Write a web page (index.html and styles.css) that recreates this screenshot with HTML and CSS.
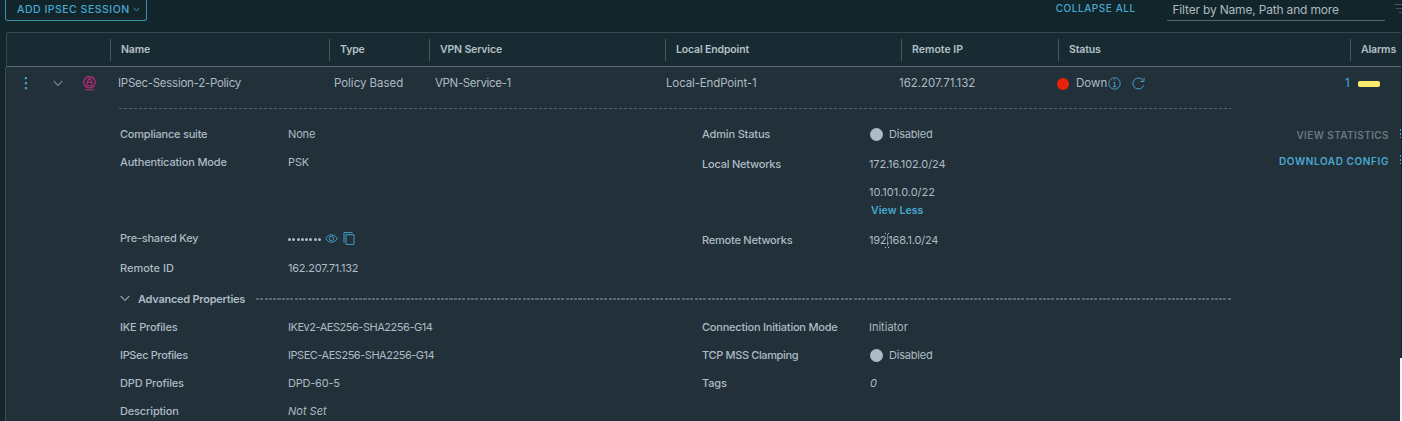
FILE: index.html
```html
<!DOCTYPE html>
<html lang="en">
<head>
<meta charset="utf-8">
<title>IPSec Sessions</title>
<link rel="stylesheet" href="styles.css">
</head>
<body>
<div class="toolbar">
  <button class="add-btn"><span class="add-text">ADD IPSEC SESSION</span>
    <svg width="7" height="5" viewBox="0 0 7 5"><path d="M.7 1 3.500 3.700 6.300 1"/></svg></button>
  <a class="collapse">COLLAPSE ALL</a>
  <div class="filter">Filter by Name, Path and more</div>
  <svg class="filter-icon" width="8" height="12" viewBox="0 0 8 12"><path d="M0 1.500h8M2 5.500h6M5 9.500h3"/></svg>
</div>
<div class="table">
  <div class="head">
    <div class="th"></div><div class="th">Name</div><div class="th">Type</div><div class="th">VPN Service</div><div class="th">Local Endpoint</div><div class="th wide">Remote IP</div><div class="th">Status</div><div class="th">Alarms</div>
  </div>
  <div class="record">
    <div class="row">
      <div class="controls">
        <svg class="dots" width="4" height="14" viewBox="0 0 4 14"><path d="M.8 1h2.200v2.200H.8zM.8 6h2.200v2.200H.8zM.8 11h2.200v2.200H.8z"/></svg>
        <svg class="chevron" width="10" height="7" viewBox="0 0 10 7"><path d="M.7 1 5 5.400 9.300 1"/></svg>
        <svg class="lock" width="13" height="15" viewBox="0 0 13 15"><path d="M4.300 11.600a5.700 5.700 0 1 1 4.400 0M4 6.200h5v3.500H4zM4.900 6V4.500a1.600 1.600 0 0 1 3.200 0V6M4.500 11.800h4M2 13.700h9"/></svg>
      </div>
      <div class="td name">IPSec-Session-2-Policy</div>
      <div class="td type">Policy Based</div>
      <div class="td vpn">VPN-Service-1</div>
      <div class="td local">Local-EndPoint-1</div>
      <div class="td remote">162.207.71.132</div>
      <div class="td status"><i class="led red"></i><span class="down">Down</span>
        <svg class="info" width="13" height="13" viewBox="0 0 13 13"><circle cx="6.500" cy="6.500" r="5.700"/><path d="M5.300 5.500h1.400v4M5 9.700h3.200M6.100 3h1"/></svg>
        <svg class="refresh" width="13" height="13" viewBox="0 0 13 13"><path d="M11.600 8.300A5.500 5.500 0 1 1 11 3.500M12 .8v3.700H8.300"/></svg>
      </div>
      <div class="td alarms"><span>1</span><i class="bar"></i></div>
    </div>
    <div class="details">
      <div class="sections">
        <div class="basic">
          <dl class="col">
            <div class="item"><dt class="snug">Compliance suite</dt><dd>None</dd></div>
            <div class="item"><dt>Authentication Mode</dt><dd>PSK</dd></div>
            <div class="item psk"><dt class="snug">Pre-shared Key</dt><dd><span class="mask"><i></i><i></i><i></i><i></i><i></i><i></i><i></i><i></i></span>
              <svg class="eye" width="13" height="9" viewBox="0 0 13 9"><path d="M.7 4.500C3.600-.5 9.400-.5 12.300 4.500 9.400 9.500 3.600 9.500.7 4.500z"/><circle cx="6.500" cy="4.500" r="2.200"/></svg>
              <svg class="copy" width="12" height="13" viewBox="0 0 12 13"><path d="M3 2.700h8v9.700H3zM1 10.500V.6h8.500"/></svg></dd></div>
            <div class="item rid"><dt class="loose">Remote ID</dt><dd class="address">162.207.71.132</dd></div>
          </dl>
          <dl class="col">
            <div class="item"><dt>Admin Status</dt><dd class="state"><i class="led"></i>Disabled</dd></div>
            <div class="item networks"><dt class="snug">Local Networks</dt><dd>172.16.102.0/24</dd></div>
            <div class="item second"><dt></dt><dd class="loose">10.101.0.0/22</dd></div>
            <div class="item less"><dt></dt><dd><a>View Less</a></dd></div>
            <div class="item rnet"><dt class="snug">Remote Networks</dt><dd class="address">192.168.1.0/24<svg class="cursor" width="7" height="15" viewBox="0 0 7 15"><path d="M1 .5h2M4 .5h2M3.500 1.500v12M1 14.500h2M4 14.500h2"/></svg></dd></div>
          </dl>
        </div>
        <div class="advanced"><svg class="chevron" width="10" height="7" viewBox="0 0 10 7"><path d="M.7 1 5 5.400 9.300 1"/></svg><b>Advanced Properties</b><span class="rule"></span></div>
        <div class="basic">
          <dl class="col">
            <div class="item"><dt class="snug">IKE Profiles</dt><dd class="profile">IKEv2-AES256-SHA2256-G14</dd></div>
            <div class="item"><dt class="tight">IPSec Profiles</dt><dd class="profile">IPSEC-AES256-SHA2256-G14</dd></div>
            <div class="item"><dt>DPD Profiles</dt><dd class="snug">DPD-60-5</dd></div>
            <div class="item"><dt>Description</dt><dd class="loose"><em>Not Set</em></dd></div>
          </dl>
          <dl class="col">
            <div class="item"><dt class="snug">Connection Initiation Mode</dt><dd class="loose">Initiator</dd></div>
            <div class="item"><dt class="tight">TCP MSS Clamping</dt><dd class="state"><i class="led"></i>Disabled</dd></div>
            <div class="item"><dt>Tags</dt><dd class="tags"><em>0</em></dd></div>
          </dl>
        </div>
      </div>
      <div class="actions"><a class="muted">VIEW STATISTICS</a><a class="download">DOWNLOAD CONFIG</a></div>
      <div class="edge"><i></i><i></i></div>
    </div>
  </div>
</div>
<div class="scroll"></div>
</body>
</html>
```
FILE: styles.css
```css
* { box-sizing: border-box; }
body { margin: 0; width: 1402px; height: 421px; overflow: hidden; position: relative; background: #12252b; color: #adbbc4; font-family: Inter, "Open Sans", sans-serif; font-size: 11px; }
svg { fill: none; stroke: #459fc4; flex: none; display: block; }
i { display: block; flex: none; }
.toolbar { height: 32px; display: flex; align-items: flex-start; padding-left: 5px; }
.add-btn { width: 142px; height: 21px; border: 1px solid #3b8fab; border-top: 0; border-radius: 0 0 3px 3px; background: none; padding: 0 0 2px 11px; display: flex; align-items: center; gap: 3px; font: 500 10.500px Inter, sans-serif; color: #49a9d0; white-space: nowrap; }
.add-text { letter-spacing: .5px; }
.collapse { margin-left: 909px; width: 112px; line-height: 16px; font-size: 10px; font-weight: 500; letter-spacing: .55px; color: #49a9d0; white-space: nowrap; }
.filter { width: 218px; height: 21px; padding-left: 5px; line-height: 19px; font-size: 12px; letter-spacing: -.18px; color: #adb9be; border-bottom: 1px solid #52666f; white-space: nowrap; }
.filter-icon { margin: 3px 0 0 9px; stroke: #41545d; }
.table { margin-left: 5px; width: 1396px; }
.head { margin-left: 1px; height: 35px; display: grid; grid-template-columns: 103px 219px 100px 236px 236px 157px 292px 1fr; align-items: center; border: 1px solid #364951; border-right: 0; border-bottom-color: #596a72; background: #182a32; border-radius: 3px 0 0 0; }
.th { height: 22px; line-height: 22px; padding-left: 10px; border-left: 1px solid #47585f; font-size: 10.500px; font-weight: 600; letter-spacing: -.15px; color: #b4c1c8; white-space: nowrap; }
.th.wide { letter-spacing: 0; }
.th:first-child { border: 0; }
.record { height: 354px; background: #22303a; border-left: 1px solid #3b4b54; }
.row { height: 41px; display: grid; grid-template-columns: 112px 216px 101px 231px 233px 158px 1fr 56px; line-height: 33px; }
.td { font-size: 11.500px; letter-spacing: -.27px; white-space: nowrap; }
.td.type, .td.remote { letter-spacing: -.03px; }
.td.vpn { letter-spacing: -.35px; }
.td.local { letter-spacing: -.13px; }
.controls { display: flex; align-items: flex-start; }
.dots { margin: 9px 0 0 18px; fill: #459fc4; stroke: none; }
.chevron { stroke: #8c9ba4; stroke-width: 1.200; }
.controls .chevron { margin: 13px 0 0 25px; stroke: #73828b; }
.lock { margin: 9px 0 0 20px; stroke: #c42a7c; stroke-width: 1.100; }
.status { display: flex; align-items: center; height: 33px; }
.led { width: 13px; height: 13px; border-radius: 50%; background: #adbbc4; margin-right: 6px; }
.led.red { background: #e62208; width: 12px; height: 12px; margin-right: 7px; }
.refresh { margin-left: 11px; }
.down { width: 32px; letter-spacing: 0; }
.alarms { display: flex; align-items: center; height: 33px; gap: 9px; color: #49afd9; }
.bar { width: 22px; height: 6px; border-radius: 2px; background: #fbec6c; }
.details { height: 313px; display: flex; margin-left: 112px; position: relative; }
.sections { width: 1113px; padding: 12px 0 0 2px; background: repeating-linear-gradient(90deg, #52636b 0 3px, transparent 3px 5px) 1px 0 / 100% 1px no-repeat; }
.basic { display: grid; grid-template-columns: 582px 1fr; }
dl, dd { margin: 0; }
.item { height: 28px; display: grid; grid-template-columns: 168px 1fr; align-items: center; white-space: nowrap; line-height: 14px; }
.col + .col .item > dd:not(.state, .tags) { margin-left: -1px; }
dt { font-weight: 500; letter-spacing: -.16px; }
dd { display: flex; align-items: center; position: relative; letter-spacing: -.13px; }
.snug { letter-spacing: -.22px; }
.tight { letter-spacing: -.36px; }
.loose { letter-spacing: 0; }
.address { letter-spacing: -.22px; }
.profile { letter-spacing: -.47px; }
.state { letter-spacing: -.2px; }
.psk { margin-top: 48px; }
.rid { height: 32px; }
.networks { height: 32px; }
.second { height: 24px; }
.less { height: 12px; }
.less a { color: #49a9d0; font-size: 10.500px; font-weight: 600; letter-spacing: .1px; padding-left: 2px; }
.rnet { margin-top: 10px; }
.mask { display: flex; gap: 1.300px; padding-top: 3px; width: 37px; }
.mask i { width: 3px; height: 3px; border-radius: 50%; background: #adbbc4; }
.copy { margin-left: 5px; }
.cursor { position: absolute; left: 15px; top: 0; stroke: #c5ced3; stroke-dasharray: 1 1; }
.advanced { height: 29px; display: flex; align-items: center; }
.advanced b { margin-left: 8px; width: 118px; font-weight: 600; letter-spacing: -.25px; white-space: nowrap; }
.rule { flex: 1; height: 2px; opacity: .7; background: repeating-linear-gradient(90deg, #6d7d85 0 3px, transparent 3px 4.300px); }
.actions { margin-left: auto; padding: 14px 12px 0 0; display: flex; flex-direction: column; align-items: flex-end; line-height: 26px; font-size: 10px; font-weight: 600; white-space: nowrap; color: #49a9d0; letter-spacing: .6px; }
.muted { color: #687983; letter-spacing: .4px; }
.edge { position: absolute; right: 0; top: 21px; width: 1px; }
.edge i { height: 9px; background: repeating-linear-gradient(#49afd9 0 2px, transparent 2px 4px); margin-bottom: 17px; }
.scroll { position: absolute; right: 0; top: 358px; width: 2px; height: 63px; background: #f4f5f5; }
```
